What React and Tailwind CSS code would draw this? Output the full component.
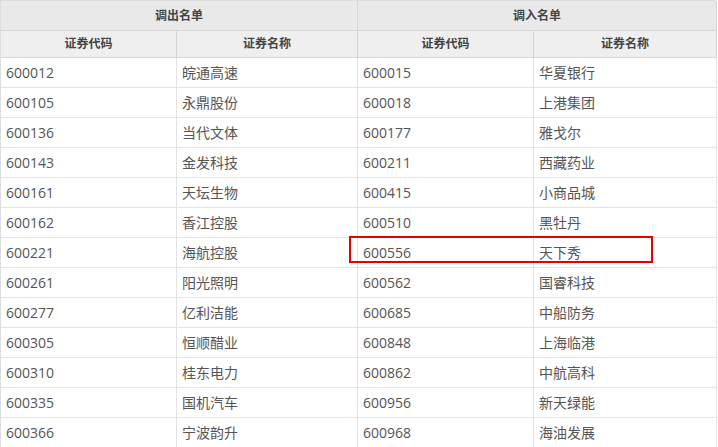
import React from 'react';

const rows = [
  ['600012', '皖通高速', '600015', '华夏银行'],
  ['600105', '永鼎股份', '600018', '上港集团'],
  ['600136', '当代文体', '600177', '雅戈尔'],
  ['600143', '金发科技', '600211', '西藏药业'],
  ['600161', '天坛生物', '600415', '小商品城'],
  ['600162', '香江控股', '600510', '黑牡丹'],
  ['600221', '海航控股', '600556', '天下秀'],
  ['600261', '阳光照明', '600562', '国睿科技'],
  ['600277', '亿利洁能', '600685', '中船防务'],
  ['600305', '恒顺醋业', '600848', '上海临港'],
  ['600310', '桂东电力', '600862', '中航高科'],
  ['600335', '国机汽车', '600956', '新天绿能'],
  ['600366', '宁波韵升', '600968', '海油发展'],
];

const cols = 'grid grid-cols-[176px_181px_176px_183px]';

export default function App() {
  return (
    <div className="relative w-[718px] h-[447px] overflow-hidden bg-white text-[#555]" style={{ fontFamily: '"Open Sans", "Noto Sans CJK SC", sans-serif' }}>
      <div className="w-[716px] border-l border-t border-[#ddd]">
        <div className="grid grid-cols-[357px_359px] h-[30px] bg-[#e9e9e9] text-[12px] font-semibold text-[#444]">
          <div className="flex items-center justify-center border-r border-b border-[#d6d6d6]">调出名单</div>
          <div className="flex items-center justify-center border-r border-b border-[#d6d6d6]">调入名单</div>
        </div>
        <div className={`${cols} h-[27px] bg-[#efefef] text-[12px] font-semibold text-[#444]`}>
          {['证券代码', '证券名称', '证券代码', '证券名称'].map((h, i) => (
            <div key={i} className="flex items-center justify-center border-r border-b border-[#d6d6d6]">{h}</div>
          ))}
        </div>
        {rows.map((r, i) => (
          <div key={i} className={`${cols} h-[30px] text-[14px]`}>
            {r.map((c, j) => (
              <div key={j} className="flex items-center pl-[5px] border-r border-b border-[#e3e3e3]">{c}</div>
            ))}
          </div>
        ))}
      </div>
      <div className="absolute left-[349px] top-[236px] w-[304px] h-[27px] border-2 border-[#e60000]" />
    </div>
  );
}
